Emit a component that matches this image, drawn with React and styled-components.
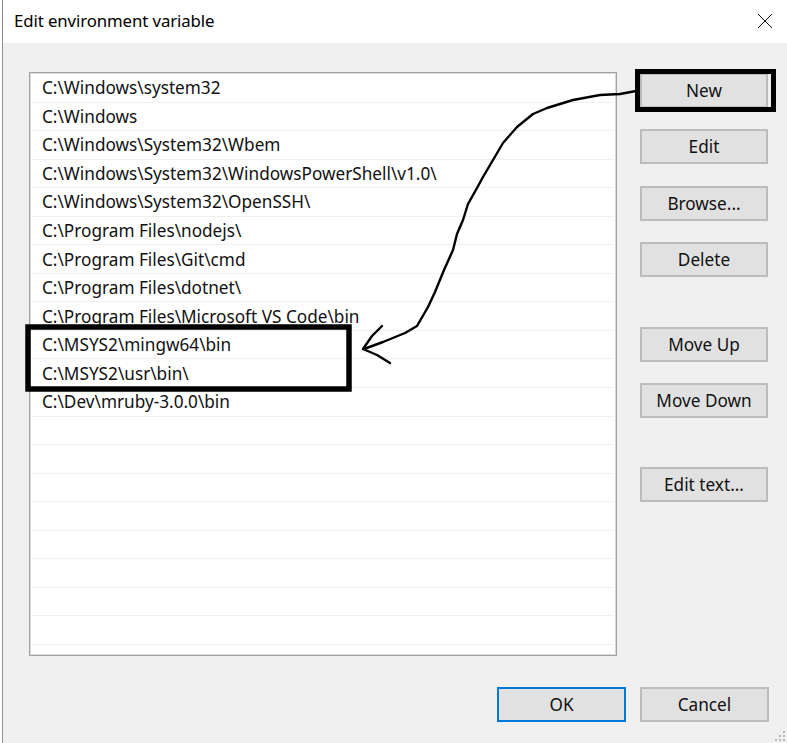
import React from "react";
import styled, { createGlobalStyle } from "styled-components";

const GlobalStyle = createGlobalStyle`
  html, body {
    margin: 0;
    padding: 0;
    background: #ffffff;
  }
  * {
    box-sizing: border-box;
  }
`;

const Screen = styled.div`
  position: relative;
  width: 787px;
  height: 743px;
  overflow: hidden;
  font-family: "Noto Sans", "Open Sans", sans-serif;
  color: #000;
`;

const Window = styled.div`
  margin-left: 2px;
  width: 785px;
  height: 743px;
  border-left: 1px solid #8f8f8f;
  display: flex;
  flex-direction: column;
`;

const TitleBar = styled.div`
  height: 43px;
  flex-shrink: 0;
  background: #fff;
  display: flex;
  align-items: center;
  justify-content: space-between;
  padding: 0 14px 0 11px;
`;

const Title = styled.div`
  font-size: 16.8px;
  letter-spacing: -0.1px;
  padding-bottom: 2px;
`;

const CloseIcon = styled.svg`
  width: 16px;
  height: 16px;
  margin-top: -2px;
`;

const Body = styled.div`
  flex: 1;
  background: #f0f0f0;
  display: flex;
  flex-direction: column;
  padding: 29px 0 0 26px;
`;

const Main = styled.div`
  display: grid;
  grid-template-columns: 588px 128px;
  column-gap: 23px;
  align-items: start;
`;

const List = styled.div`
  height: 584px;
  background: #fff;
  border: 1px solid #a3a3a3;
  box-shadow: inset 0 0 0 1px #dadada;
  padding: 1px 2px;
  overflow: hidden;
`;

const Row = styled.div`
  height: 28.55px;
  border-bottom: 1.5px solid #f0f0f0;
  display: flex;
  align-items: center;
  padding-left: 10px;
  font-size: 17.2px;
  white-space: nowrap;
  color: #111;
`;

const ButtonColumn = styled.div`
  display: flex;
  flex-direction: column;
  padding-top: 1px;
`;

const Button = styled.div`
  width: 128px;
  height: 35px;
  margin-top: ${(p) => p.$gap || 0}px;
  background: #e1e1e1;
  border: 2px solid ${(p) => (p.$default ? "#0078d7" : "#bcbcbc")};
  display: flex;
  align-items: center;
  justify-content: center;
  font-size: 17.2px;
  padding-bottom: 1px;
  color: #111;
`;

const Footer = styled.div`
  display: flex;
  justify-content: flex-end;
  gap: 14px;
  margin-top: 31px;
  padding-right: 18px;

  ${Button} {
    width: 129px;
  }
`;

const Grip = styled.svg`
  position: absolute;
  right: 1px;
  bottom: 1px;
  width: 12px;
  height: 12px;
`;

const Annotations = styled.svg`
  position: absolute;
  left: 0;
  top: 0;
  width: 787px;
  height: 743px;
  pointer-events: none;
`;

const paths = [
  "C:\\Windows\\system32",
  "C:\\Windows",
  "C:\\Windows\\System32\\Wbem",
  "C:\\Windows\\System32\\WindowsPowerShell\\v1.0\\",
  "C:\\Windows\\System32\\OpenSSH\\",
  "C:\\Program Files\\nodejs\\",
  "C:\\Program Files\\Git\\cmd",
  "C:\\Program Files\\dotnet\\",
  "C:\\Program Files\\Microsoft VS Code\\bin",
  "C:\\MSYS2\\mingw64\\bin",
  "C:\\MSYS2\\usr\\bin\\",
  "C:\\Dev\\mruby-3.0.0\\bin",
];

const rows = [...paths, ...Array(10).fill("")];

const buttons = [
  { label: "New", gap: 0 },
  { label: "Edit", gap: 21 },
  { label: "Browse...", gap: 22 },
  { label: "Delete", gap: 21 },
  { label: "Move Up", gap: 50 },
  { label: "Move Down", gap: 21 },
  { label: "Edit text...", gap: 49 },
];

const arrowLine = [
  [636, 91], [620, 94], [600, 95], [573, 100], [547, 108], [533, 114],
  [517, 127], [503, 143], [493, 160], [483, 177], [477, 188], [468, 204],
  [463, 220], [457, 234], [453, 250], [444, 270], [435, 292], [428, 307],
  [417, 326], [405, 333], [383, 342], [364, 349],
]
  .map((p) => p.join(","))
  .join(" ");

const App = () => (
  <Screen>
    <GlobalStyle />
    <Window>
      <TitleBar>
        <Title>Edit environment variable</Title>
        <CloseIcon viewBox="0 0 16 16">
          <path d="M1 1 L15 15 M15 1 L1 15" stroke="#111" strokeWidth="1" />
        </CloseIcon>
      </TitleBar>

      <Body>
        <Main>
          <List>
            {rows.map((r, i) => (
              <Row key={i}>{r}</Row>
            ))}
          </List>

          <ButtonColumn>
            {buttons.map((b) => (
              <Button key={b.label} $gap={b.gap}>
                {b.label}
              </Button>
            ))}
          </ButtonColumn>
        </Main>

        <Footer>
          <Button $default>OK</Button>
          <Button>Cancel</Button>
        </Footer>
      </Body>
    </Window>

    <Grip viewBox="0 0 12 12">
      {[
        [9, 1], [9, 5], [5, 5], [9, 9], [5, 9], [1, 9],
      ].map(([x, y]) => (
        <rect key={`${x}-${y}`} x={x} y={y} width="2" height="2" fill="#b8b8b8" />
      ))}
    </Grip>

    <Annotations viewBox="0 0 787 743">
      <rect x="637.5" y="71.5" width="136" height="38" fill="none" stroke="#000" strokeWidth="5" />
      <rect x="28" y="327" width="321" height="62" fill="none" stroke="#000" strokeWidth="5.5" />
      <polyline
        points={arrowLine}
        fill="none"
        stroke="#000"
        strokeWidth="2.4"
        strokeLinejoin="round"
        strokeLinecap="round"
      />
      <path
        d="M382 326 L372 336 L363 349 L377 355 L390 363"
        fill="none"
        stroke="#000"
        strokeWidth="2.4"
        strokeLinejoin="round"
        strokeLinecap="round"
      />
    </Annotations>
  </Screen>
);

export default App;
